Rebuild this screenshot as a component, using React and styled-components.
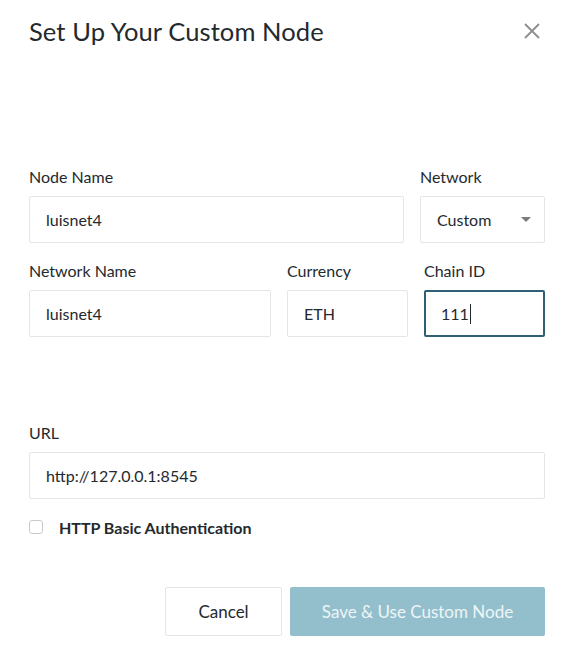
import React, { useState } from 'react';
import styled, { createGlobalStyle } from 'styled-components';

const GlobalStyle = createGlobalStyle`
  html, body {
    margin: 0;
    padding: 0;
    background: #ffffff;
    font-family: Lato, "Open Sans", sans-serif;
    color: #24292e;
  }
  * { box-sizing: border-box; }
`;

const Modal = styled.div`
  width: 575px;
  height: 648px;
  padding: 14px 30px 0 29px;
  display: flex;
  flex-direction: column;
`;

const Header = styled.div`
  display: flex;
  align-items: center;
  justify-content: space-between;
  height: 34px;
`;

const Title = styled.h1`
  margin: 0;
  font-size: 25.5px;
  font-weight: 400;
  color: #24292e;
  letter-spacing: 0.1px;
`;

const CloseButton = styled.button`
  background: none;
  border: none;
  padding: 0;
  margin-right: 4px;
  width: 18px;
  height: 18px;
  display: flex;
  align-items: center;
  justify-content: center;
  cursor: pointer;
`;

const Form = styled.div`
  margin-top: 120px;
  display: flex;
  flex-direction: column;
`;

const Row = styled.div`
  display: grid;
  grid-template-columns: ${({ columns }) => columns};
  column-gap: 16px;
  margin-bottom: ${({ gap }) => gap || 0}px;
`;

const Field = styled.label`
  display: flex;
  flex-direction: column;
`;

const Label = styled.span`
  font-size: 16px;
  line-height: 18px;
  color: #24292e;
  margin-bottom: 10px;
`;

const Input = styled.input`
  height: 47px;
  width: 100%;
  border: 1px solid #e3e6e9;
  border-radius: 2px;
  padding: 0 16px;
  font-family: Lato, "Open Sans", sans-serif;
  font-size: 16px;
  color: #24292e;
  background: #fff;
  outline: none;
`;

const Caret = styled.span`
  display: inline-block;
  width: 1px;
  height: 20px;
  background: #24292e;
  margin-left: 1px;
`;

const FocusedInput = styled.div`
  height: 47px;
  border: 2px solid #2f5f74;
  border-radius: 2px;
  padding: 0 15px;
  display: flex;
  align-items: center;
  font-size: 16px;
  color: #24292e;
`;

const Select = styled.div`
  height: 47px;
  border: 1px solid #e3e6e9;
  border-radius: 2px;
  padding: 0 13px 0 16px;
  display: flex;
  align-items: center;
  justify-content: space-between;
  font-size: 16px;
  color: #24292e;
`;

const CheckRow = styled.div`
  display: flex;
  align-items: center;
  margin-top: 20px;
  height: 16px;
`;

const Checkbox = styled.span`
  width: 14px;
  height: 14px;
  border: 1px solid #c8cbce;
  border-radius: 3px;
  margin-right: 16px;
  background: #fff;
`;

const CheckLabel = styled.span`
  font-size: 16px;
  font-weight: 700;
  color: #24292e;
`;

const Footer = styled.div`
  display: flex;
  justify-content: flex-end;
  gap: 8px;
  margin-top: 52px;
`;

const Button = styled.button`
  height: 49px;
  width: ${({ width }) => width}px;
  border-radius: 2px;
  font-family: Lato, "Open Sans", sans-serif;
  font-size: 17px;
  border: ${({ primary }) => (primary ? 'none' : '1px solid #e3e6e9')};
  background: ${({ primary }) => (primary ? '#93bfcc' : '#fff')};
  color: ${({ primary }) => (primary ? '#eef5f7' : '#24292e')};
  cursor: pointer;
`;

export default function App() {
  const [nodeName, setNodeName] = useState('luisnet4');
  const [networkName, setNetworkName] = useState('luisnet4');
  const [currency, setCurrency] = useState('ETH');
  const [url, setUrl] = useState('http://127.0.0.1:8545');

  return (
    <>
      <GlobalStyle />
      <Modal>
        <Header>
          <Title>Set Up Your Custom Node</Title>
          <CloseButton aria-label="Close">
            <svg width="16" height="16" viewBox="0 0 16 16">
              <path d="M1 1 L15 15 M15 1 L1 15" stroke="#8d8d8d" strokeWidth="1.8" />
            </svg>
          </CloseButton>
        </Header>

        <Form>
          <Row columns="375px 125px" gap={19}>
            <Field>
              <Label>Node Name</Label>
              <Input value={nodeName} onChange={(e) => setNodeName(e.target.value)} />
            </Field>
            <Field>
              <Label>Network</Label>
              <Select>
                Custom
                <svg width="10" height="5" viewBox="0 0 10 5">
                  <path d="M0 0 L10 0 L5 5 Z" fill="#7b7b7b" />
                </svg>
              </Select>
            </Field>
          </Row>

          <Row columns="242px 121px 121px" gap={87}>
            <Field>
              <Label>Network Name</Label>
              <Input value={networkName} onChange={(e) => setNetworkName(e.target.value)} />
            </Field>
            <Field>
              <Label>Currency</Label>
              <Input value={currency} onChange={(e) => setCurrency(e.target.value)} />
            </Field>
            <Field>
              <Label>Chain ID</Label>
              <FocusedInput>
                111<Caret />
              </FocusedInput>
            </Field>
          </Row>

          <Row columns="1fr">
            <Field>
              <Label>URL</Label>
              <Input value={url} onChange={(e) => setUrl(e.target.value)} />
            </Field>
          </Row>

          <CheckRow>
            <Checkbox />
            <CheckLabel>HTTP Basic Authentication</CheckLabel>
          </CheckRow>
        </Form>

        <Footer>
          <Button width={117}>Cancel</Button>
          <Button primary width={255}>Save &amp; Use Custom Node</Button>
        </Footer>
      </Modal>
    </>
  );
}
